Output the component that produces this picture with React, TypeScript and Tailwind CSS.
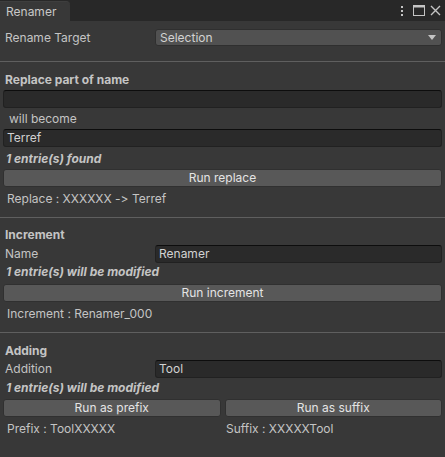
import React from "react";

const Input = ({ value, className = "" }: { value?: string; className?: string }) => (
  <div
    className={`h-[18px] bg-[#2a2a2a] border border-[#212121] border-t-[#0d0d0d] rounded-[3px] flex items-center pl-[3px] text-[#d2d2d2] ${className}`}
  >
    {value}
  </div>
);

const Button = ({ label, className = "" }: { label: string; className?: string }) => (
  <div
    className={`h-[18px] bg-[#585858] border border-[#303030] rounded-[3px] flex items-center justify-center text-[#e4e4e4] ${className}`}
  >
    {label}
  </div>
);

const Sep = ({ className = "" }: { className?: string }) => (
  <div className={`h-px bg-[#5f5f5f] -mx-[3px] ${className}`} />
);

export default function App() {
  return (
    <div
      className="w-[445px] h-[457px] bg-[#383838] text-[#c4c4c4] text-[12px] overflow-hidden [font-variant-ligatures:none]"
      style={{ fontFamily: "Inter, 'Noto Sans', sans-serif" }}
    >
      {/* Tab bar */}
      <div className="h-[21px] bg-[#282828] flex items-end justify-between">
        <div className="h-[20px] w-[70px] bg-[#383838] rounded-tr-[4px] border-t border-[#3e3e3e] flex items-center pl-[6px] text-[#c8c8c8]">
          Renamer
        </div>
        <div className="flex items-center h-[21px] pr-[4px] self-start">
          <svg width="4" height="12" viewBox="0 0 4 12" className="mr-[9px]">
            <rect x="1" y="1" width="2" height="2" fill="#c4c4c4" />
            <rect x="1" y="5" width="2" height="2" fill="#c4c4c4" />
            <rect x="1" y="9" width="2" height="2" fill="#c4c4c4" />
          </svg>
          <svg width="12" height="11" viewBox="0 0 12 11" className="mr-[5px]">
            <rect x="0.5" y="0.5" width="11" height="10" fill="none" stroke="#c4c4c4" />
            <rect x="0.5" y="0.5" width="11" height="2" fill="#c4c4c4" />
          </svg>
          <svg width="11" height="11" viewBox="0 0 11 11">
            <path d="M1 1 L10 10 M10 1 L1 10" stroke="#c4c4c4" strokeWidth="1.4" />
          </svg>
        </div>
      </div>

      <div className="px-[3px]">
        {/* Rename target */}
        <div className="mt-[8px] h-[17px] flex items-center">
          <div className="w-[152px] pl-[2px]">Rename Target</div>
          <div className="flex-1 h-[17px] bg-[#515151] border border-[#2f2f2f] rounded-[3px] flex items-center justify-between pl-[4px] pr-[5px] text-[#d2d2d2]">
            <span>Selection</span>
            <svg width="8" height="5" viewBox="0 0 8 5">
              <path d="M0 0 L8 0 L4 5 Z" fill="#c4c4c4" />
            </svg>
          </div>
        </div>

        <Sep className="mt-[15px]" />

        {/* Replace */}
        <div className="mt-[10px] h-[16px] leading-[16px] font-bold pl-[2px]">Replace part of name</div>
        <Input className="mt-[2px]" />
        <div className="mt-[3px] h-[16px] leading-[16px] pl-[6px]">will become</div>
        <Input className="mt-[2px]" value="Terref" />
        <div className="mt-[4px] h-[16px] leading-[16px] font-bold italic pl-[3px]">1 entrie(s) found</div>
        <Button className="mt-[2px]" label="Run replace" />
        <div className="mt-[4px] h-[16px] leading-[16px] pl-[4px]">Replace : XXXXXX -&gt; Terref</div>

        <Sep className="mt-[10px]" />

        {/* Increment */}
        <div className="mt-[9px] h-[16px] leading-[16px] font-bold pl-[2px]">Increment</div>
        <div className="mt-[2px] flex items-center h-[18px]">
          <div className="w-[152px] pl-[2px]">Name</div>
          <Input className="flex-1" value="Renamer" />
        </div>
        <div className="mt-[1px] h-[16px] leading-[16px] font-bold italic pl-[3px]">1 entrie(s) will be modified</div>
        <Button className="mt-[4px]" label="Run increment" />
        <div className="mt-[4px] h-[16px] leading-[16px] pl-[4px]">Increment : Renamer_000</div>

        <Sep className="mt-[10px]" />

        {/* Adding */}
        <div className="mt-[10px] h-[16px] leading-[16px] font-bold pl-[2px]">Adding</div>
        <div className="mt-[1px] flex items-center h-[18px]">
          <div className="w-[152px] pl-[2px]">Addition</div>
          <Input className="flex-1" value="Tool" />
        </div>
        <div className="mt-[2px] h-[16px] leading-[16px] font-bold italic pl-[3px]">1 entrie(s) will be modified</div>
        <div className="mt-[3px] flex gap-[4px]">
          <Button className="flex-1" label="Run as prefix" />
          <Button className="flex-1" label="Run as suffix" />
        </div>
        <div className="mt-[4px] flex h-[16px] leading-[16px]">
          <div className="flex-1 pl-[4px]">Prefix : ToolXXXXX</div>
          <div className="flex-1 pl-[3px]">Suffix : XXXXXTool</div>
        </div>
      </div>
    </div>
  );
}
